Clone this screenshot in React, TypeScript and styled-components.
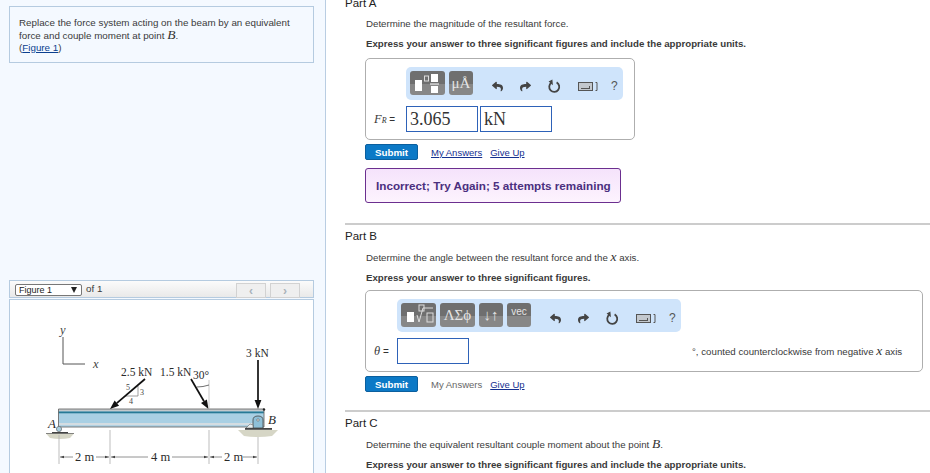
import styled, { createGlobalStyle } from "styled-components";
import { FaReply, FaShare } from "react-icons/fa";

const GlobalStyle = createGlobalStyle`
  html, body {
    margin: 0;
    padding: 0;
    background: #fff;
    overflow: hidden;
  }
  body {
    font-family: "Liberation Sans", Arial, sans-serif;
    color: #3a3a3a;
  }
`;

const Page = styled.div`
  display: flex;
  width: 930px;
  height: 473px;
  overflow: hidden;
`;

const LeftPane = styled.aside`
  flex: 0 0 326px;
  box-sizing: border-box;
  height: 473px;
  padding: 6px 11px 0 9px;
  background: #f4f9ff;
  border-right: 1px solid #b9cde2;
  display: flex;
  flex-direction: column;
`;

const PromptBox = styled.div`
  box-sizing: border-box;
  height: 57px;
  padding: 10px 9px;
  border: 1px solid #b5cbe0;
  font-size: 9.8px;
  line-height: 12px;
`;

const MathVar = styled.i`
  font-family: "Liberation Serif", serif;
  font-size: 13.5px;
  color: #333;
`;

const FigureLink = styled.a`
  color: #0b3f8f;
  text-decoration: underline;
`;

const FigureToolbar = styled.div`
  box-sizing: border-box;
  height: 18px;
  margin-top: 217px;
  padding: 3px 13px 0 5px;
  display: flex;
  align-items: flex-start;
  gap: 4px;
  border: 1px solid #b5cbe0;
  background: linear-gradient(#fbfbfb, #e9e9e9);
  font-size: 9.8px;
`;

const FigureSelect = styled.div`
  box-sizing: border-box;
  width: 67px;
  height: 12px;
  padding-left: 3px;
  display: flex;
  justify-content: space-between;
  align-items: center;
  border: 1px solid #777;
  border-radius: 2px;
  background: #fff;
  color: #222;
  font-size: 9px;
  line-height: 10px;
`;

const SelectCaret = styled.span`
  width: 0;
  height: 0;
  margin-right: 4px;
  border-left: 3px solid transparent;
  border-right: 3px solid transparent;
  border-top: 6px solid #222;
`;

const OfLabel = styled.span`
  flex: 1;
  line-height: 10px;
`;

const PagerButton = styled.div`
  box-sizing: border-box;
  width: 30px;
  height: 15px;
  margin-top: -1px;
  display: flex;
  align-items: center;
  justify-content: center;
  border: 1px solid #d2d2d2;
  background: #efefef;
  color: #a9b2ba;
  font-size: 12px;
  font-weight: bold;
`;

const FigureBox = styled.div`
  flex: 1;
  margin-top: 1px;
  border: 1px solid #b5cbe0;
  border-bottom: 0;
  background: #fff;
`;

const RightPane = styled.main`
  flex: 1;
  box-sizing: border-box;
  padding-left: 19px;
  margin-top: -4px;
`;

const PartSection = styled.section<{ $height: number; $divider?: boolean }>`
  box-sizing: border-box;
  height: ${(p) => p.$height}px;
  ${(p) => (p.$divider ? "border-top: 2px solid #cccccc; padding-top: 4px;" : "")}
`;

const PartTitle = styled.h3`
  margin: 0;
  font-size: 11.5px;
  line-height: 14px;
  font-weight: normal;
  color: #222;
`;

const PartBody = styled.div`
  padding-left: 21px;
`;

const Question = styled.p`
  margin: 7px 0 0;
  font-size: 9.7px;
  line-height: 13px;
`;

const Instruction = styled.p`
  margin: 7px 0 0;
  font-size: 9.7px;
  line-height: 13px;
  font-weight: bold;
`;

const AnswerBox = styled.div<{ $width: number; $inset: number; $top: number }>`
  box-sizing: border-box;
  width: ${(p) => p.$width}px;
  height: 82px;
  margin: ${(p) => p.$top}px 0 0 -1px;
  padding: 8px 0 0 ${(p) => p.$inset}px;
  border: 1px solid #aeaeae;
  border-radius: 5px;
  background: #fff;
`;

const Toolbar = styled.div<{ $width: number }>`
  box-sizing: border-box;
  width: ${(p) => p.$width}px;
  height: 33px;
  padding: 4px;
  display: flex;
  align-items: flex-start;
  gap: 4px;
  background: #cfe4fb;
  border-radius: 5px;
`;

const TemplateButton = styled.div<{ $width: number }>`
  box-sizing: border-box;
  width: ${(p) => p.$width}px;
  height: 24px;
  display: flex;
  align-items: center;
  justify-content: center;
  border-radius: 3px;
  background: linear-gradient(#6f6f6f 0 55%, #878787 55% 100%);
  color: #e4e4e4;
  font-family: "Liberation Serif", serif;
  font-size: 15px;
`;

const VecLabel = styled.span`
  font-family: "Liberation Sans", sans-serif;
  font-size: 10px;
  margin-top: -8px;
`;

const ToolIcons = styled.div`
  flex: 1;
  height: 24px;
  display: flex;
  align-items: center;
  gap: 17px;
  padding: 3px 0 0 15px;
  color: #444;
`;

const HelpMark = styled.span`
  margin-left: -4px;
  font-size: 12px;
  color: #555;
`;

const AnswerRow = styled.div`
  display: flex;
  align-items: center;
  gap: 2px;
  margin-top: 6px;
  position: relative;
`;

const RowLabel = styled.span<{ $left: number }>`
  position: absolute;
  left: ${(p) => p.$left}px;
  top: 6px;
  font-size: 10px;
  color: #333;
  white-space: nowrap;
`;

const LabelVar = styled.i`
  font-family: "Liberation Serif", serif;
  font-size: 12.5px;
  color: #3a3a3a;
`;

const LabelSub = styled.i`
  font-family: "Liberation Serif", serif;
  font-size: 8px;
`;

const ValueField = styled.div<{ $width: number }>`
  box-sizing: border-box;
  width: ${(p) => p.$width}px;
  height: 26px;
  padding: 2px 3px;
  border: 1px solid #2e62b8;
  background: #fff;
  font-family: "Liberation Serif", serif;
  font-size: 18px;
  line-height: 20px;
  color: #333;
`;

const ActionRow = styled.div`
  display: flex;
  align-items: center;
  margin: 4px 0 0 -1px;
  font-size: 9.5px;
`;

const SubmitButton = styled.button`
  box-sizing: border-box;
  width: 53px;
  height: 16px;
  margin-right: 13px;
  padding: 0;
  border: 1px solid #0b5f9e;
  border-radius: 2px;
  background: #0c79c6;
  color: #fff;
  font-family: inherit;
  font-size: 9.8px;
  font-weight: bold;
`;

const ActionLink = styled.a<{ $muted?: boolean }>`
  margin-right: 8px;
  color: ${(p) => (p.$muted ? "#666" : "#14308f")};
  text-decoration: ${(p) => (p.$muted ? "none" : "underline")};
`;

const Feedback = styled.div`
  box-sizing: border-box;
  width: 256px;
  height: 35px;
  margin: 8px 0 0 -1px;
  padding-left: 10px;
  display: flex;
  align-items: center;
  border: 1px solid #6b2f8f;
  border-radius: 3px;
  background: linear-gradient(#f5e3fb, #fdf3fe);
  color: #4b2f7f;
  font-size: 11.7px;
  font-weight: bold;
`;

const UnitNote = styled.span`
  margin-left: 221px;
  font-size: 9.7px;
  white-space: nowrap;
`;

function RedoIcon() {
  return (
    <svg width="13" height="14" viewBox="0 0 13 14">
      <path d="M8.6 3.4A5 5 0 1 1 3.4 3.7" fill="none" stroke="#444" strokeWidth="1.8" />
      <path d="M4.4 0.4L4.9 6.2L0.6 2.6z" fill="#444" />
    </svg>
  );
}

function KeyboardIcon() {
  return (
    <svg width="20" height="11" viewBox="0 0 20 11" fill="none" stroke="#555">
      <rect x="0.5" y="1.5" width="14" height="8" fill="#c3c8ce" />
      <path d="M3 7.5h9M11.5 5v2.5" />
      <path d="M17.5 1.5h1.5v8h-1.5" />
    </svg>
  );
}

function FractionGlyph() {
  return (
    <svg width="33" height="22" viewBox="0 0 33 22">
      <rect x="4" y="8" width="7" height="11" fill="#fff" />
      <rect x="13.5" y="4" width="4" height="5" fill="none" stroke="#ddd" />
      <rect x="20" y="2" width="7" height="8" fill="#fff" />
      <rect x="19" y="11.5" width="9" height="1" fill="#fff" />
      <rect x="20" y="14" width="7" height="7" fill="#fff" />
    </svg>
  );
}

function RadicalGlyph() {
  return (
    <svg width="33" height="24" viewBox="0 0 33 24">
      <rect x="5" y="9" width="7" height="10" fill="#fff" />
      <rect x="17" y="2" width="5" height="6" fill="none" stroke="#ddd" />
      <path d="M15 12l2 7 4-14h10" fill="none" stroke="#ddd" />
      <rect x="25" y="10" width="6" height="9" fill="none" stroke="#ddd" />
    </svg>
  );
}

function ToolSet() {
  return (
    <ToolIcons>
      <FaReply size={11} />
      <FaShare size={11} />
      <RedoIcon />
      <KeyboardIcon />
      <HelpMark>?</HelpMark>
    </ToolIcons>
  );
}

// straight force arrow with a solid head, tip at (x2, y2)
function Force({ x1, y1, x2, y2 }: { x1: number; y1: number; x2: number; y2: number }) {
  const a = Math.atan2(y2 - y1, x2 - x1);
  const len = 9;
  const half = 3.4;
  const bx = x2 - len * Math.cos(a);
  const by = y2 - len * Math.sin(a);
  const nx = -Math.sin(a) * half;
  const ny = Math.cos(a) * half;
  return (
    <g>
      <line x1={x1} y1={y1} x2={bx} y2={by} stroke="#111" strokeWidth="1.7" />
      <polygon points={`${x2},${y2} ${bx + nx},${by + ny} ${bx - nx},${by - ny}`} fill="#111" />
    </g>
  );
}

// one dimension segment with a small arrow tip at its end
function DimLine({ from, to }: { from: number; to: number }) {
  const dir = to > from ? 1 : -1;
  return (
    <g>
      <line x1={from} y1={458} x2={to} y2={458} stroke="#777" strokeWidth="0.8" />
      <polygon points={`${to},458 ${to - dir * 4},456.7 ${to - dir * 4},459.3`} fill="#444" />
    </g>
  );
}

function BeamFigure() {
  const serif = "Liberation Serif, serif";
  return (
    <svg width="303" height="172" viewBox="10 301 303 172" style={{ display: "block" }}>
      <path d="M63 338V365H85" fill="none" stroke="#555" />
      <g fontFamily={serif} fontStyle="italic" fontSize="12.5" fill="#444">
        <text x="60" y="335">y</text>
        <text x="93" y="369">x</text>
      </g>

      <g fontFamily={serif} fontSize="11.5" fill="#2a2a2a">
        <text x="121" y="377">2.5 kN</text>
        <text x="160" y="377">1.5 kN</text>
        <text x="193" y="380">30°</text>
        <text x="246" y="358">3 kN</text>
        <text x="48" y="429" fontStyle="italic" fontSize="13">A</text>
        <text x="268" y="425" fontStyle="italic" fontSize="13">B</text>
        <text x="75" y="462" fontSize="12.5">2 m</text>
        <text x="151" y="462" fontSize="12.5">4 m</text>
        <text x="224" y="462" fontSize="12.5">2 m</text>
      </g>
      <g fontFamily={serif} fontSize="8" fill="#444">
        <text x="126" y="391">5</text>
        <text x="140" y="396">3</text>
        <text x="129" y="405">4</text>
      </g>
      <path d="M125 397H138V387" fill="none" stroke="#777" strokeWidth="0.7" />

      <rect x="58" y="410" width="206" height="18" fill="#a9d0e4" />
      <rect x="58" y="410" width="206" height="2.4" fill="#c4c9cc" />
      <rect x="58" y="412.5" width="206" height="1.8" fill="#277a96" />
      <rect x="58" y="424" width="206" height="2.2" fill="#d4dde2" />
      <path d="M58.5 428V410H264V428H58.5" fill="none" stroke="#6d6d6d" strokeWidth="0.9" />
      <circle cx="264" cy="410.5" r="1.2" fill="#222" />

      <Force x1={145} y1={380} x2={110} y2={410} />
      <Force x1={191} y1={380} x2={208.5} y2={410} />
      <Force x1={258} y1={361} x2={258} y2={410} />
      <path d="M209 381V410" stroke="#bbb" strokeWidth="0.8" />
      <path d="M197 388Q203 388 209 386" fill="none" stroke="#333" strokeWidth="0.7" />

      <circle cx="59" cy="430" r="2.6" fill="#a9cfe0" stroke="#666" strokeWidth="0.7" />
      <rect x="52" y="433" width="16" height="1.6" fill="#444" />
      <path d="M46 434.5H74L70 439Q60 441 50 439z" fill="#d6d6c6" />
      <path d="M46 434.5H74" stroke="#555" strokeWidth="0.7" />

      <path d="M253 429V421Q253 417 258 417Q263 417 263 421V429z" fill="#8fc0d8" stroke="#444" strokeWidth="0.8" />
      <circle cx="258" cy="421" r="1.2" fill="#eee" stroke="#444" strokeWidth="0.5" />
      <path d="M246 429L250 425L253 426V429z" fill="#e8eef0" stroke="#555" strokeWidth="0.5" />
      <rect x="245" y="429" width="27" height="1.8" fill="#444" />
      <path d="M238 431H278L272 437Q258 439 244 437z" fill="#d6d6c6" />

      <path d="M59 436V465M110 431V465M209 431V465M258 438V465" stroke="#b5b5b5" strokeWidth="0.9" />
      <DimLine from={73} to={60} />
      <DimLine from={96} to={109} />
      <DimLine from={148} to={111} />
      <DimLine from={172} to={208} />
      <DimLine from={222} to={210} />
      <DimLine from={243} to={257} />
    </svg>
  );
}

export default function App() {
  return (
    <>
      <GlobalStyle />
      <Page>
        <LeftPane>
          <PromptBox>
            Replace the force system acting on the beam by an equivalent
            <br />
            force and couple moment at point <MathVar>B</MathVar>.
            <br />
            (<FigureLink>Figure 1</FigureLink>)
          </PromptBox>
          <FigureToolbar>
            <FigureSelect>
              Figure 1
              <SelectCaret />
            </FigureSelect>
            <OfLabel>of 1</OfLabel>
            <PagerButton>‹</PagerButton>
            <PagerButton>›</PagerButton>
          </FigureToolbar>
          <FigureBox>
            <BeamFigure />
          </FigureBox>
        </LeftPane>
        <RightPane>
          <PartSection $height={227}>
            <PartTitle>Part A</PartTitle>
            <PartBody>
              <Question>Determine the magnitude of the resultant force.</Question>
              <Instruction>Express your answer to three significant figures and include the appropriate units.</Instruction>
              <AnswerBox $width={270} $inset={40} $top={8}>
                <Toolbar $width={217}>
                  <TemplateButton $width={35}>
                    <FractionGlyph />
                  </TemplateButton>
                  <TemplateButton $width={24}>μÅ</TemplateButton>
                  <ToolSet />
                </Toolbar>
                <AnswerRow>
                  <RowLabel $left={-32}>
                    <LabelVar>F</LabelVar>
                    <LabelSub>R</LabelSub> =
                  </RowLabel>
                  <ValueField $width={72}>3.065</ValueField>
                  <ValueField $width={72}>kN</ValueField>
                </AnswerRow>
              </AnswerBox>
              <ActionRow>
                <SubmitButton>Submit</SubmitButton>
                <ActionLink>My Answers</ActionLink>
                <ActionLink>Give Up</ActionLink>
              </ActionRow>
              <Feedback>Incorrect; Try Again; 5 attempts remaining</Feedback>
            </PartBody>
          </PartSection>
          <PartSection $height={187} $divider>
            <PartTitle>Part B</PartTitle>
            <PartBody>
              <Question>
                Determine the angle between the resultant force and the <MathVar>x</MathVar> axis.
              </Question>
              <Instruction>Express your answer to three significant figures.</Instruction>
              <AnswerBox $width={558} $inset={31} $top={6}>
                <Toolbar $width={284}>
                  <TemplateButton $width={35}>
                    <RadicalGlyph />
                  </TemplateButton>
                  <TemplateButton $width={35}>ΛΣϕ</TemplateButton>
                  <TemplateButton $width={24}>↓↑</TemplateButton>
                  <TemplateButton $width={24}>
                    <VecLabel>vec</VecLabel>
                  </TemplateButton>
                  <ToolSet />
                </Toolbar>
                <AnswerRow>
                  <RowLabel $left={-23}>
                    <LabelVar>θ</LabelVar> =
                  </RowLabel>
                  <ValueField $width={72} />
                  <UnitNote>
                    °, counted counterclockwise from negative <MathVar>x</MathVar> axis
                  </UnitNote>
                </AnswerRow>
              </AnswerBox>
              <ActionRow>
                <SubmitButton>Submit</SubmitButton>
                <ActionLink $muted>My Answers</ActionLink>
                <ActionLink>Give Up</ActionLink>
              </ActionRow>
            </PartBody>
          </PartSection>
          <PartSection $height={70} $divider>
            <PartTitle>Part C</PartTitle>
            <PartBody>
              <Question>
                Determine the equivalent resultant couple moment about the point <MathVar>B</MathVar>.
              </Question>
              <Instruction>Express your answer to three significant figures and include the appropriate units.</Instruction>
            </PartBody>
          </PartSection>
        </RightPane>
      </Page>
    </>
  );
}
